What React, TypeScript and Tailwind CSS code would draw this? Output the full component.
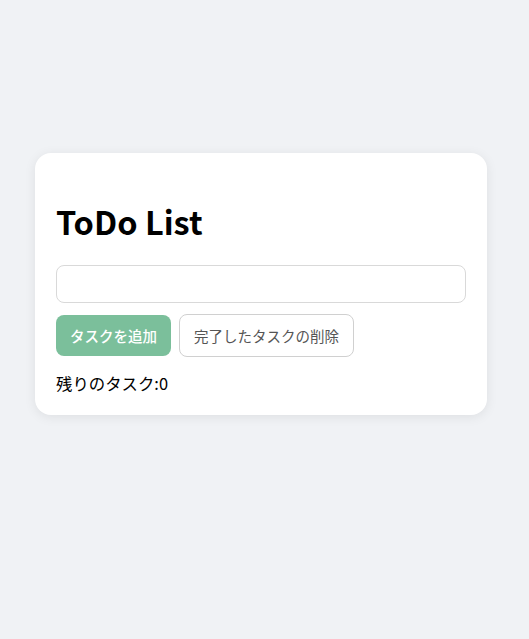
export default function App() {
  return (
    <div className="min-h-[639px] bg-[#f0f2f5] pt-[153px] pl-[35px]" style={{ fontFamily: '"Noto Sans CJK JP", "Noto Sans", sans-serif' }}>
      <div className="w-[452px] rounded-[16px] bg-white px-[21px] pt-[20px] pb-[20px] shadow-[0_2px_12px_rgba(0,0,0,0.08)]">
        <h1 className="mt-[24px] mb-[20px] text-[32.5px] font-bold leading-[48px] text-black">ToDo List</h1>
        <input className="block h-[38px] w-[410px] rounded-[8px] border border-[#d9d9d9] px-3 outline-none" />
        <div className="mt-[12px] flex gap-[8px]">
          <button className="h-[41px] rounded-[8px] bg-[#7bbf9b] px-[14px] text-[14.5px] font-medium text-white">タスクを追加</button>
          <button className="h-[43px] -mt-[1px] rounded-[8px] border border-[#d0d0d0] bg-white px-[14px] text-[14.5px] text-[#555]">完了したタスクの削除</button>
        </div>
        <p className="mt-[14px] text-[16.4px] leading-[24px] text-black">残りのタスク:0</p>
      </div>
    </div>
  );
}
